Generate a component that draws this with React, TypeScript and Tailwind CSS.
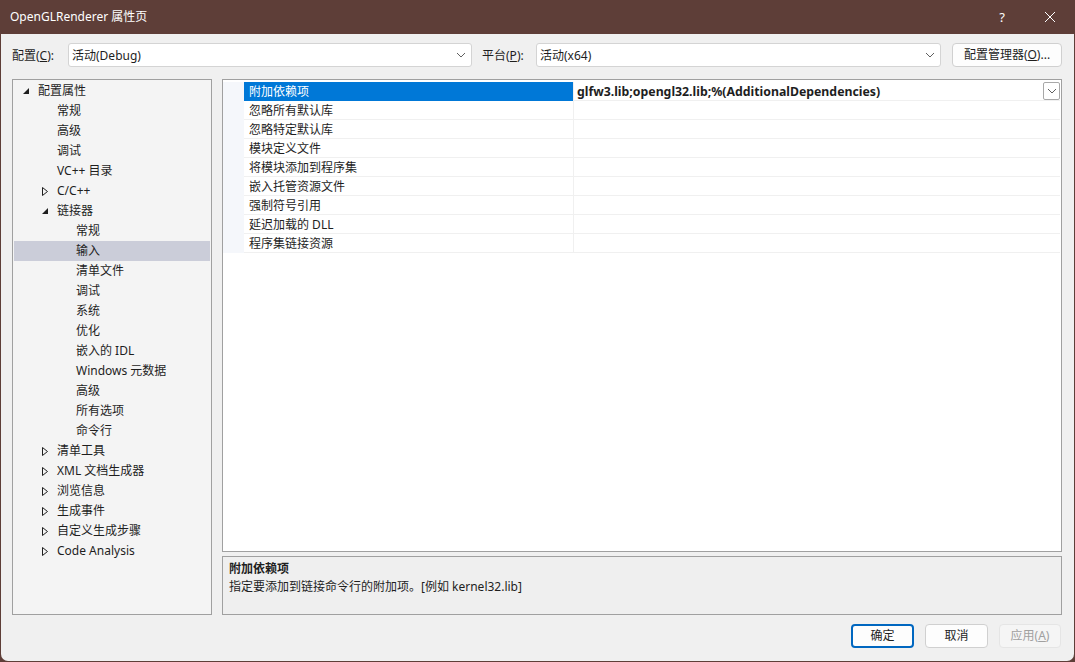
import React from 'react';

type TreeItem = { label: string; level: number; arrow?: 'open' | 'closed'; selected?: boolean };

const tree: TreeItem[] = [
  { label: '配置属性', level: 0, arrow: 'open' },
  { label: '常规', level: 1 },
  { label: '高级', level: 1 },
  { label: '调试', level: 1 },
  { label: 'VC++ 目录', level: 1 },
  { label: 'C/C++', level: 1, arrow: 'closed' },
  { label: '链接器', level: 1, arrow: 'open' },
  { label: '常规', level: 2 },
  { label: '输入', level: 2, selected: true },
  { label: '清单文件', level: 2 },
  { label: '调试', level: 2 },
  { label: '系统', level: 2 },
  { label: '优化', level: 2 },
  { label: '嵌入的 IDL', level: 2 },
  { label: 'Windows 元数据', level: 2 },
  { label: '高级', level: 2 },
  { label: '所有选项', level: 2 },
  { label: '命令行', level: 2 },
  { label: '清单工具', level: 1, arrow: 'closed' },
  { label: 'XML 文档生成器', level: 1, arrow: 'closed' },
  { label: '浏览信息', level: 1, arrow: 'closed' },
  { label: '生成事件', level: 1, arrow: 'closed' },
  { label: '自定义生成步骤', level: 1, arrow: 'closed' },
  { label: 'Code Analysis', level: 1, arrow: 'closed' },
];

const props = [
  '附加依赖项',
  '忽略所有默认库',
  '忽略特定默认库',
  '模块定义文件',
  '将模块添加到程序集',
  '嵌入托管资源文件',
  '强制符号引用',
  '延迟加载的 DLL',
  '程序集链接资源',
];

// left padding per tree level
const indent = ['pl-[9px]', 'pl-[28px]', 'pl-[47px]'];

function Chevron({ className = '' }: { className?: string }) {
  return (
    <svg width="10" height="6" viewBox="0 0 10 6" className={className}>
      <path d="M1 1 L5 5 L9 1" fill="none" stroke="#606060" strokeWidth="1" />
    </svg>
  );
}

function Arrow({ kind }: { kind?: 'open' | 'closed' }) {
  if (kind === 'open') {
    return (
      <svg width="6" height="6" viewBox="0 0 6 6" className="mr-[9px] shrink-0">
        <path d="M6 0 L6 6 L0 6 Z" fill="#1e1e1e" />
      </svg>
    );
  }
  if (kind === 'closed') {
    return (
      <svg width="6" height="9" viewBox="0 0 6 9" className="mr-[9px] shrink-0">
        <path d="M0.5 0.5 L5.5 4.5 L0.5 8.5 Z" fill="none" stroke="#1e1e1e" strokeWidth="1" />
      </svg>
    );
  }
  return <span className="w-[6px] mr-[9px] shrink-0" />;
}

function Select({ value, className = '' }: { value: string; className?: string }) {
  return (
    <div className={`h-[24px] flex items-center justify-between bg-white border border-[#d4d4d4] rounded-[3px] pl-[3px] pr-[5px] ${className}`}>
      <span className="pt-[1px]">{value}</span>
      <Chevron />
    </div>
  );
}

export default function App() {
  return (
    <div className="w-[1075px] h-[662px] bg-[#5e3e38] flex flex-col font-['Noto_Sans','Noto_Sans_CJK_SC',sans-serif] text-[12px] leading-[20px] text-[#1e1e1e] overflow-hidden">
      {/* title bar */}
      <div className="h-[34px] flex items-center justify-between pl-[10px] text-white text-[12px] shrink-0">
        <span>OpenGLRenderer 属性页</span>
        <div className="flex items-center">
          <span className="w-[46px] text-center text-[13px]">?</span>
          <svg width="12" height="12" viewBox="0 0 12 12" className="mx-[19px]">
            <path d="M1 1 L11 11 M11 1 L1 11" stroke="#fff" strokeWidth="1" />
          </svg>
        </div>
      </div>

      {/* body */}
      <div className="flex-1 mx-[1px] mb-[1px] bg-[#f0f0f0] rounded-b-[7px] flex flex-col pl-[11px] pr-[12px] pt-[9px]">
        <div className="flex items-center h-[24px]">
          <span className="w-[56px] pt-[1px]">配置(<span className="underline">C</span>):</span>
          <Select value="活动(Debug)" className="w-[404px]" />
          <span className="ml-[10px] w-[54px] pt-[1px]">平台(<span className="underline">P</span>):</span>
          <Select value="活动(x64)" className="w-[405px]" />
          <div className="ml-[11px] h-[24px] w-[110px] flex items-center justify-center bg-[#fdfdfd] border border-[#d0d0d0] rounded-[4px]">
            配置管理器(<span className="underline">O</span>)...
          </div>
        </div>

        <div className="flex mt-[12px] gap-[10px] h-[536px]">
          {/* tree */}
          <div className="w-[200px] border border-[#a0a0a0] bg-[#f4f4f4] pt-[1px] overflow-hidden">
            {tree.map((t, i) => (
              <div
                key={i}
                className={`h-[20px] flex items-center mx-[1px] ${indent[t.level]} ${t.selected ? 'bg-[#cbcdd9]' : ''}`}
              >
                <Arrow kind={t.arrow} />
                <span className="whitespace-nowrap">{t.label}</span>
              </div>
            ))}
          </div>

          {/* right side */}
          <div className="flex-1 flex flex-col gap-[4px]">
            <div className="h-[473px] border border-[#a0a0a0] bg-white pt-[2px] pr-[1px]">
              {props.map((p, i) => (
                <div key={i} className="h-[19px] flex">
                  <div className="w-[21px] bg-[#f5f7fb]" />
                  <div
                    className={`w-[329px] pl-[5px] pt-[1px] leading-[18px] whitespace-nowrap ${i === 0 ? 'bg-[#0078d7] text-white' : 'border-b border-[#f0f0f0]'}`}
                  >
                    {p}
                  </div>
                  <div className="flex-1 border-l border-[#f0f0f0] border-b flex items-center justify-between">
                    {i === 0 ? (
                      <>
                        <span className="pl-[3px] pt-[1px] font-bold leading-[18px] text-[12.3px]">glfw3.lib;opengl32.lib;%(AdditionalDependencies)</span>
                        <div className="w-[17px] h-[18px] border border-[#a8a8a8] rounded-[2px] flex items-center justify-center bg-white">
                          <Chevron />
                        </div>
                      </>
                    ) : null}
                  </div>
                </div>
              ))}
            </div>
            <div className="h-[59px] border border-[#a0a0a0] bg-[#efefef] px-[6px] pt-[2px]">
              <div className="font-bold leading-[20px]">附加依赖项</div>
              <div className="leading-[16px]">指定要添加到链接命令行的附加项。[例如 kernel32.lib]</div>
            </div>
          </div>
        </div>

        <div className="flex justify-end mt-[9px] gap-[11px] pr-[1px]">
          <div className="w-[63px] h-[24px] flex items-center justify-center bg-[#fdfdfd] border-2 border-[#0067c0] rounded-[4px]">确定</div>
          <div className="w-[63px] h-[24px] flex items-center justify-center bg-[#fdfdfd] border border-[#d0d0d0] rounded-[4px]">取消</div>
          <div className="w-[62px] h-[24px] flex items-center justify-center bg-[#f5f5f5] border border-[#e5e5e5] rounded-[4px] text-[#a0a0a0]">
            应用(<span className="underline">A</span>)
          </div>
        </div>
      </div>
    </div>
  );
}
